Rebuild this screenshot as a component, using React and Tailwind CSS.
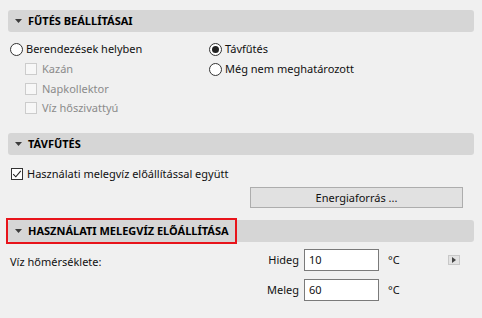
import React from "react";

const font = { fontFamily: '"Noto Sans", "Open Sans", Arial, sans-serif' };

function Tri() {
  return (
    <svg width="7" height="4" viewBox="0 0 7 4" className="shrink-0">
      <path d="M0 0 L7 0 L3.5 4 Z" fill="#3c3c3c" />
    </svg>
  );
}

function SectionBar({ title, children }) {
  return (
    <div className="relative mx-2 h-[22px] rounded-[3px] bg-[#d6d6d6] flex items-center pl-[7px] gap-[6px]">
      <Tri />
      <span className="font-bold text-[11px] leading-[16px] text-black">{title}</span>
      {children}
    </div>
  );
}

function Radio({ checked, label }) {
  return (
    <div className="flex items-center gap-[3px]">
      <span className="w-[13px] h-[13px] rounded-full border border-[#333] bg-white flex items-center justify-center">
        {checked && <span className="w-[7px] h-[7px] rounded-full bg-[#222]" />}
      </span>
      <span className="text-[11px] leading-[16px] text-[#111]">{label}</span>
    </div>
  );
}

function DisabledCheck({ label }) {
  return (
    <div className="flex items-center gap-[5px] pl-[15px]">
      <span className="w-[12px] h-[12px] border border-[#cccccc] bg-[#f7f7f7]" />
      <span className="text-[11px] leading-[16px] text-[#8b8b8b]">{label}</span>
    </div>
  );
}

export default function App() {
  return (
    <div className="w-[482px] h-[318px] bg-[#f0f0f0] pt-[10px] overflow-hidden text-[11px] leading-[16px]" style={font}>
      <SectionBar title="FŰTÉS BEÁLLÍTÁSAI" />
      <div className="flex pt-[7px] pl-[10px]">
        <div className="w-[199px] flex flex-col">
          <div className="h-[20px] flex items-center"><Radio label="Berendezések helyben" /></div>
          <div className="h-[20px] flex items-center"><DisabledCheck label="Kazán" /></div>
          <div className="h-[19px] flex items-center"><DisabledCheck label="Napkollektor" /></div>
          <div className="h-[19px] flex items-center"><DisabledCheck label="Víz hőszivattyú" /></div>
        </div>
        <div className="flex flex-col">
          <div className="h-[20px] flex items-center"><Radio checked label="Távfűtés" /></div>
          <div className="h-[20px] flex items-center"><Radio label="Még nem meghatározott" /></div>
        </div>
      </div>
      <div className="h-[16px]" />
      <SectionBar title="TÁVFŰTÉS" />
      <div className="pl-[11px] pt-[9px] h-[29px] flex items-center">
        <div className="flex items-center gap-[4px]">
          <span className="w-[12px] h-[12px] border border-[#333] bg-white flex items-center justify-center">
            <svg width="10" height="10" viewBox="0 0 10 10">
              <path d="M1.2 5.2 L3.8 7.8 L8.8 1.8" fill="none" stroke="#222" strokeWidth="1.1" />
            </svg>
          </span>
          <span className="text-[11px] text-[#111]">Használati melegvíz előállítással együtt</span>
        </div>
      </div>
      <div className="flex justify-end pr-[19px] pt-[3px]">
        <button className="w-[213px] h-[21px] bg-[#e1e1e1] border border-[#adadad] text-[11px] text-[#111] flex items-center justify-center">
          Energiaforrás ...
        </button>
      </div>
      <div className="h-[12px]" />
      <SectionBar title="HASZNÁLATI MELEGVÍZ ELŐÁLLÍTÁSA">
        <div className="absolute left-[-2px] top-[-2px] w-[231px] h-[26px] border-2 border-[#e8141b]" />
      </SectionBar>
      <div className="flex pt-[7px] pl-[10px]">
        <div className="w-[252px] pt-[5px] text-[11px] leading-[16px] text-[#111]">
          Víz hőmérséklete:
        </div>
        <div className="flex flex-col gap-[8px]">
          <div className="flex items-center">
            <span className="w-[37px] text-right text-[11px] text-[#111]">Hideg</span>
            <div className="ml-[5px] w-[75px] h-[22px] border border-[#7a7a7a] bg-white flex items-center pl-[4px] text-[11px] text-[#111]">10</div>
            <span className="ml-[9px] text-[11px] text-[#111]">°C</span>
            <span className="ml-[48px] w-[12px] h-[10px] bg-[#e3e3e3] border border-[#c8c8c8] flex items-center justify-center">
              <svg width="4" height="6" viewBox="0 0 4 6"><path d="M0 0 L4 3 L0 6 Z" fill="#444" /></svg>
            </span>
          </div>
          <div className="flex items-center">
            <span className="w-[37px] text-right text-[11px] text-[#111]">Meleg</span>
            <div className="ml-[5px] w-[75px] h-[22px] border border-[#7a7a7a] bg-white flex items-center pl-[4px] text-[11px] text-[#111]">60</div>
            <span className="ml-[9px] text-[11px] text-[#111]">°C</span>
          </div>
        </div>
      </div>
    </div>
  );
}
